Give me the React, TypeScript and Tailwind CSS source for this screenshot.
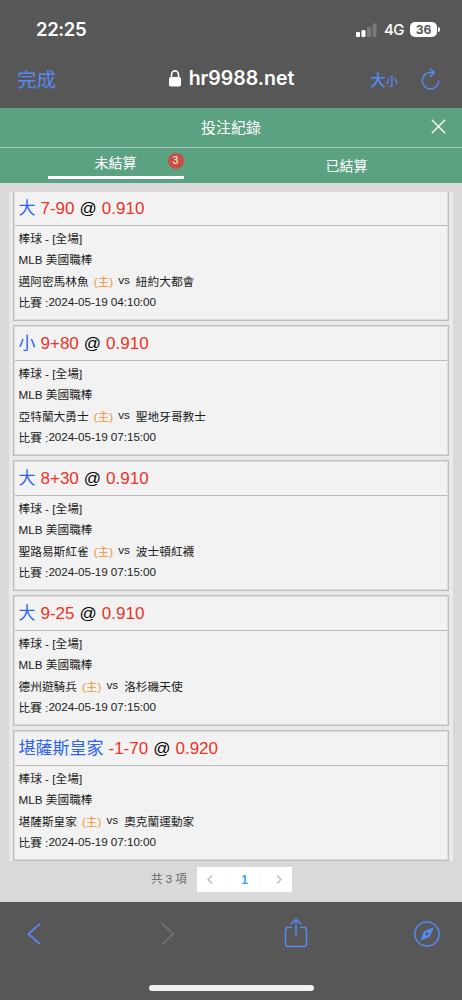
interface Bet {
    pick: string;
    line: string;
    odds: string;
    home: string;
    away: string;
    time: string;
}

const bets: Bet[] = [
    { pick: '大', line: '7-90', odds: '0.910', home: '邁阿密馬林魚', away: '紐約大都會', time: '2024-05-19 04:10:00' },
    { pick: '小', line: '9+80', odds: '0.910', home: '亞特蘭大勇士', away: '聖地牙哥教士', time: '2024-05-19 07:15:00' },
    { pick: '大', line: '8+30', odds: '0.910', home: '聖路易斯紅雀', away: '波士頓紅襪', time: '2024-05-19 07:15:00' },
    { pick: '大', line: '9-25', odds: '0.910', home: '德州遊騎兵', away: '洛杉磯天使', time: '2024-05-19 07:15:00' },
    { pick: '堪薩斯皇家', line: '-1-70', odds: '0.920', home: '堪薩斯皇家', away: '奧克蘭運動家', time: '2024-05-19 07:10:00' },
];

function StatusBar() {
    return (
        <div className="flex h-[59px] items-center justify-between pl-9 pr-[22px] font-['Inter','Noto_Sans_CJK_TC',sans-serif] text-white">
            <span className="text-[18.5px] font-semibold leading-none tracking-[-0.4px]">22:25</span>
            <div className="flex items-center">
                <svg className="mr-[7px] h-[14px] w-[21px]" viewBox="0 0 21 14">
                    <rect x="0" y="9" width="4" height="5" rx="1" fill="#fff" />
                    <rect x="5.5" y="7" width="4" height="7" rx="1" fill="#fff" />
                    <rect x="11" y="4" width="4" height="10" rx="1" fill="#7b7b7b" />
                    <rect x="16.5" y="0.5" width="4" height="13.5" rx="1" fill="#7b7b7b" />
                </svg>
                <span className="mr-[6px] text-[15px] font-medium leading-none tracking-[-0.5px]">4G</span>
                <span className="flex h-[15px] w-[27px] items-center justify-center rounded-[5px] bg-white text-[12px] font-bold leading-none text-[#555]">
                    36
                </span>
                <span className="ml-px h-[5px] w-[2px] rounded-r-full bg-white" />
            </div>
        </div>
    );
}

function AddressBar() {
    return (
        <div className="grid h-[49px] grid-cols-[1fr_auto_1fr] items-center pl-[17px] pr-[22px] text-[#568af2]">
            <span className="pb-[9px] font-['Noto_Sans_CJK_TC',sans-serif] text-[19.5px] leading-none">完成</span>
            <div className="flex items-center pb-[10px] pl-[6px] font-['Inter',sans-serif] text-white">
                <svg className="mr-[8px] h-[17px] w-[12px]" viewBox="0 0 12 17">
                    <rect x="0" y="7" width="12" height="9.5" rx="1.8" fill="#fff" />
                    <path d="M2.5 8V4.7a3.5 3.8 0 0 1 7 0V8" fill="none" stroke="#fff" strokeWidth="1.6" />
                </svg>
                <span className="text-[19.5px] font-semibold leading-none">hr9988.net</span>
            </div>
            <div className="flex items-center justify-end pb-[10px] font-['Noto_Sans_CJK_TC',sans-serif] font-medium leading-none">
                <span className="flex items-baseline">
                    <span className="text-[16px]">大</span>
                    <span className="text-[12px]">小</span>
                </span>
                <svg className="ml-[23px] h-[22px] w-[19px]" viewBox="0 0 19 22" fill="none" stroke="currentColor" strokeWidth="1.5" strokeLinecap="round" strokeLinejoin="round">
                    <path d="M12.5 4.5H9.5a8.2 8.2 0 1 0 8.2 8.2" />
                    <path d="M9.5 1l3.8 3.6-3.8 3.8" />
                </svg>
            </div>
        </div>
    );
}

function BetCard({ bet }: { bet: Bet }) {
    return (
        <li className="h-[131px] border border-[#bdbdbd] bg-[#f2f2f2] text-[11.7px] text-[#1c1c1c] outline-1 -outline-offset-2 outline-[#dcdcdc]">
            <div className="flex h-[35px] items-center gap-[5px] border-b border-[#b8b8b8] pl-[4.5px] text-[17px] leading-none">
                <span className="text-[#2c62f0]">{bet.pick}</span>
                <span className="text-[#ec3326]">{bet.line}</span>
                <span className="text-black">@</span>
                <span className="text-[#ec3326]">{bet.odds}</span>
            </div>
            <div className="flex flex-col pl-[4.5px] pt-[2px] leading-[21px]">
                <div>棒球 - [全場]</div>
                <div>MLB 美國職棒</div>
                <div className="mt-px flex">
                    <span>{bet.home}</span>
                    <span className="ml-[5px] text-[#f09536]">(主)</span>
                    <span className="ml-[5px] -mt-[2px]">vs</span>
                    <span className="ml-[6px]">{bet.away}</span>
                </div>
                <div className="flex">
                    <span>比賽 :</span>
                    <span className="-mt-px tracking-[-0.05px]">{bet.time}</span>
                </div>
            </div>
        </li>
    );
}

function Pagination() {
    return (
        <div className="flex h-[41px] items-center pb-[4px] pl-[151px]">
            <span className="w-[46px] text-[11.5px] text-[#666]">共 3 項</span>
            <div className="grid h-[25px] w-[95px] grid-cols-3 items-center bg-white text-[#b6b9c0]">
                <svg className="ml-[10px] h-[9px] w-[6px]" viewBox="0 0 6 9" fill="none" stroke="currentColor" strokeWidth="1.2">
                    <path d="M5 .5l-4 4 4 4" />
                </svg>
                <span className="flex h-full items-center justify-center border-x border-[#f7f7f7] text-[12px] font-bold text-[#409eff]">1</span>
                <svg className="mr-[10px] h-[9px] w-[6px] justify-self-end" viewBox="0 0 6 9" fill="none" stroke="currentColor" strokeWidth="1.2">
                    <path d="M1 .5l4 4-4 4" />
                </svg>
            </div>
        </div>
    );
}

function Toolbar() {
    return (
        <footer className="flex h-[98px] flex-col items-center bg-[#575757]">
            <div className="flex h-[63px] w-full items-center pl-[27px] text-[#568af2]">
                <svg className="h-[22px] w-[14px]" viewBox="0 0 14 22" fill="none" stroke="currentColor" strokeWidth="1.7" strokeLinecap="round" strokeLinejoin="round">
                    <path d="M12.5 1.2L1.5 11l11 9.8" />
                </svg>
                <svg className="ml-[120px] h-[22px] w-[14px]" viewBox="0 0 14 22" fill="none" stroke="#747474" strokeWidth="1.6" strokeLinecap="round" strokeLinejoin="round">
                    <path d="M1.5 1.2L12.5 11l-11 9.8" />
                </svg>
                <svg className="mb-px ml-[109px] h-[30px] w-[24px]" viewBox="0 0 24 30" fill="none" stroke="currentColor" strokeWidth="1.5" strokeLinecap="round" strokeLinejoin="round">
                    <path d="M7.5 9.5H4A2.5 2.5 0 0 0 1.5 12v14A2.5 2.5 0 0 0 4 28.5h16a2.5 2.5 0 0 0 2.5-2.5V12A2.5 2.5 0 0 0 20 9.5h-3.5" />
                    <path d="M12 18.5v-17M7 6l5-4.7L17 6" />
                </svg>
                <svg className="ml-[106px] h-[26px] w-[26px]" viewBox="0 0 26 26">
                    <circle cx="13" cy="13" r="12.1" fill="none" stroke="currentColor" strokeWidth="1.5" />
                    <path d="M19.2 6.8l-3.6 8.8-8.8 3.6 3.6-8.8z" fill="currentColor" stroke="currentColor" strokeWidth="0.8" strokeLinejoin="round" />
                    <circle cx="13" cy="13" r="1.6" fill="#575757" />
                </svg>
            </div>
            <div className="mt-5 h-[6px] w-[165px] rounded-full bg-[#f1f1f1]" />
        </footer>
    );
}

export default function App() {
    return (
        <div className="flex h-[1000px] w-[462px] flex-col overflow-hidden bg-[#d9d9d9] font-['Liberation_Sans','Noto_Sans_CJK_TC',sans-serif]">
            <header className="h-[108px] bg-[#575757]">
                <StatusBar />
                <AddressBar />
            </header>

            <div className="grid h-10 grid-cols-[1fr_auto_1fr] items-center border-b border-[#a5c9b8] bg-[#5ba283] text-white">
                <h1 className="col-start-2 text-[15px] leading-none">投注紀錄</h1>
                <svg className="mr-4 mb-[2px] h-[15px] w-[15px] justify-self-end" viewBox="0 0 15 15" fill="none" stroke="currentColor" strokeWidth="1.4">
                    <path d="M.8.8l13.4 13.4M14.2.8L.8 14.2" />
                </svg>
            </div>
            <nav className="grid h-[35px] grid-cols-2 bg-[#5ba283] text-[14px] leading-none text-white">
                <div className="relative mx-auto mt-px flex h-[30px] w-[136px] items-center justify-center border-b-[3px] border-white">
                    未結算
                    <span className="absolute right-0 top-[4px] flex h-4 w-4 items-center justify-center rounded-full bg-[#c94f43] text-[10px]">3</span>
                </div>
                <div className="flex items-center justify-center">已結算</div>
            </nav>

            <main className="mx-[9px] mt-[9px] h-[669px] shrink-0 overflow-hidden bg-[#e9e9e9] px-1">
                <ul className="-mt-[2px] flex flex-col gap-1">
                    {bets.map((bet) => (
                        <BetCard key={bet.home} bet={bet} />
                    ))}
                </ul>
            </main>
            <Pagination />
            <Toolbar />
        </div>
    );
}
